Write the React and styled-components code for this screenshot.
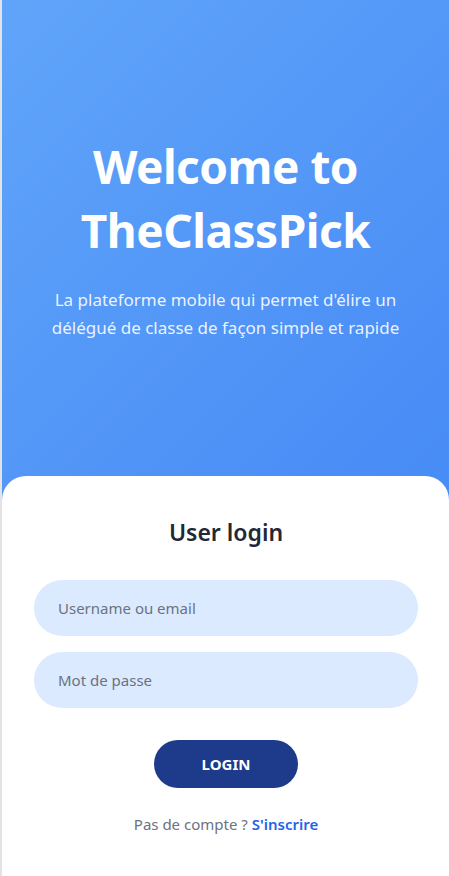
import styled, { createGlobalStyle } from "styled-components";

const GlobalStyle = createGlobalStyle`
  * {
    box-sizing: border-box;
  }

  html,
  body {
    margin: 0;
    padding: 0;
    height: 100%;
  }

  body {
    font-family: "Noto Sans", "Open Sans", sans-serif;
    background: #ffffff;
  }

  #root {
    min-height: 100%;
  }
`;

const Page = styled.div`
  display: flex;
  flex-direction: column;
  min-height: 100vh;
  border-left: 2px solid #e3e3e3;
  background: linear-gradient(135deg, #60a5fa 0%, #4b8ef6 60%, #3f86f5 100%);
`;

const Hero = styled.section`
  display: flex;
  flex: 1;
  flex-direction: column;
  align-items: center;
  justify-content: center;
  padding: 0 24px;
  text-align: center;
`;

const Heading = styled.h1`
  margin: 0 0 24px;
  color: #ffffff;
  font-size: 46px;
  font-weight: 700;
  line-height: 64px;
  letter-spacing: -0.5px;
`;

const Tagline = styled.p`
  margin: 0;
  max-width: 360px;
  color: rgba(255, 255, 255, 0.9);
  font-size: 17px;
  line-height: 28px;
`;

const Card = styled.section`
  display: flex;
  flex-direction: column;
  align-items: center;
  height: 400px;
  padding: 40px 31px 0 32px;
  border-radius: 24px 24px 0 0;
  background: #ffffff;
`;

const CardTitle = styled.h2`
  margin: 0 0 32px;
  color: #1f2937;
  font-size: 23px;
  font-weight: 600;
  line-height: 32px;
`;

const Form = styled.form`
  display: flex;
  flex-direction: column;
  align-items: center;
  gap: 16px;
  width: 100%;
`;

const Field = styled.input`
  width: 100%;
  height: 56px;
  padding: 0 24px;
  border: none;
  border-radius: 999px;
  outline: none;
  background: #dbeafe;
  color: #1f2937;
  font-family: inherit;
  font-size: 15px;

  &::placeholder {
    color: #6b7280;
  }
`;

const LoginButton = styled.button`
  width: 144px;
  height: 48px;
  margin-top: 16px;
  border: none;
  border-radius: 999px;
  background: #1e3a8a;
  color: #ffffff;
  font-family: inherit;
  font-size: 15px;
  font-weight: 700;
  cursor: pointer;
`;

const Footer = styled.p`
  margin: 24px 0 0;
  color: #6b7280;
  font-size: 15px;
  line-height: 24px;
`;

const SignupLink = styled.a`
  color: #2563eb;
  font-weight: 600;
  text-decoration: none;
`;

export default function App() {
  return (
    <>
      <GlobalStyle />
      <Page>
        <Hero>
          <Heading>
            Welcome to
            <br />
            TheClassPick
          </Heading>
          <Tagline>
            La plateforme mobile qui permet d'élire un délégué de classe de
            façon simple et rapide
          </Tagline>
        </Hero>

        <Card>
          <CardTitle>User login</CardTitle>
          <Form onSubmit={(e) => e.preventDefault()}>
            <Field type="text" placeholder="Username ou email" />
            <Field type="password" placeholder="Mot de passe" />
            <LoginButton type="submit">LOGIN</LoginButton>
          </Form>
          <Footer>
            Pas de compte ? <SignupLink href="#">S'inscrire</SignupLink>
          </Footer>
        </Card>
      </Page>
    </>
  );
}
